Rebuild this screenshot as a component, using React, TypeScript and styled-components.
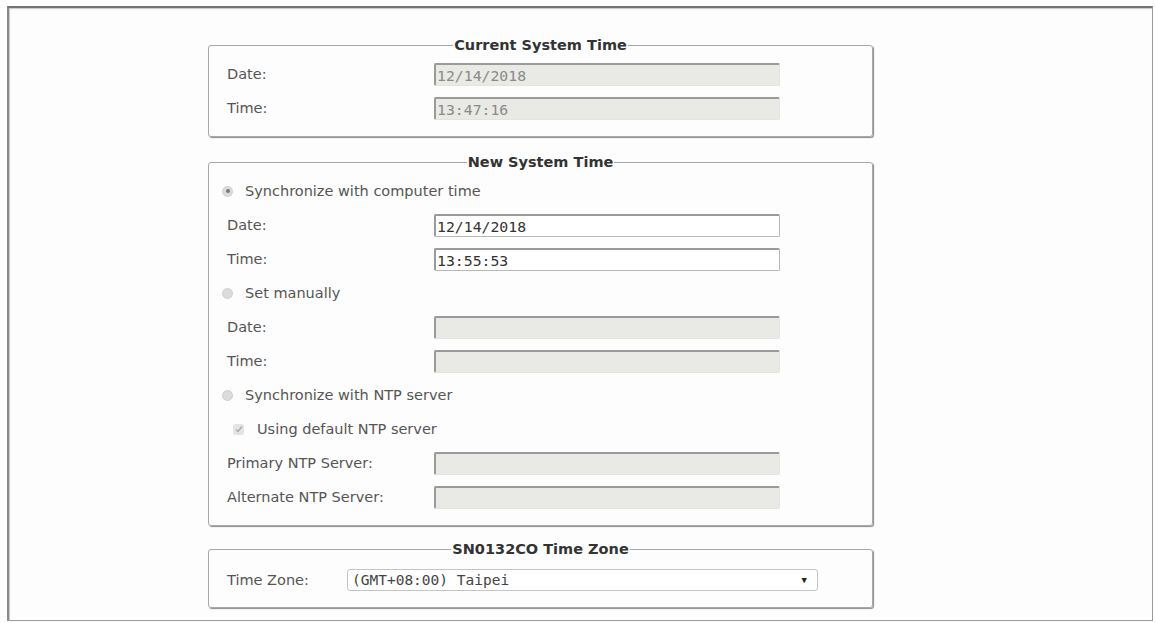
import React from "react";
import styled, { createGlobalStyle } from "styled-components";

const GlobalStyle = createGlobalStyle`
  html, body {
    margin: 0;
    padding: 0;
    background: #fff;
  }
  body {
    font-family: "DejaVu Sans", Verdana, sans-serif;
    font-size: 14.5px;
    color: #555;
  }
`;

const Page = styled.div`
  padding: 6px 3px 3px 7px;
`;

const Panel = styled.div`
  box-sizing: border-box;
  width: 1146px;
  height: 615px;
  border: 1px solid #9a9a9a;
  border-top: 2px solid #747474;
  border-left: 2px solid #8a8a8a;
  box-shadow: inset 1px 1px 1px #c8c8c8;
  background: #fdfdfd;
  padding: 29px 0 0 199px;
  display: flex;
  flex-direction: column;
  gap: 17px;
`;

const Group = styled.fieldset`
  box-sizing: border-box;
  width: 665px;
  margin: 0;
  padding: 4px 18px 11px;
  border: 1px solid #a8a8a8;
  border-radius: 3px;
  box-shadow: 1px 1px 1px #8c8c8c;
  min-inline-size: 0;

  &:last-child {
    margin-top: -2px;
    padding-top: 6px;
    padding-bottom: 10px;
  }
`;

const Title = styled.legend`
  margin: 0 auto;
  padding: 0 1px;
  line-height: 16px;
  font-weight: bold;
  font-size: 14.5px;
  color: #333;
`;

const Row = styled.div<{ $indent?: number }>`
  height: 34px;
  display: flex;
  align-items: center;
  padding-left: ${(p) => p.$indent ?? 0}px;
`;

const Label = styled.span<{ $width?: number }>`
  width: ${(p) => p.$width ?? 207}px;
  flex: none;
  color: #555;
`;

const Field = styled.div<{ $disabled?: boolean }>`
  box-sizing: border-box;
  width: 346px;
  height: 23px;
  display: flex;
  align-items: center;
  padding: 1px 0 0 1px;
  font-family: "DejaVu Sans Mono", "Liberation Mono", monospace;
  font-size: 14.8px;
  border-radius: 2px;
  color: ${(p) => (p.$disabled ? "#8a8a8a" : "#333")};
  background: ${(p) => (p.$disabled ? "#e9e9e5" : "#fff")};
  border: 1px solid ${(p) => (p.$disabled ? "#e4e4df" : "#b8b8b8")};
  border-top: 2px solid #9a9a9a;
  border-left: 2px solid #9a9a9a;
`;

const Select = styled.div`
  box-sizing: border-box;
  width: 471px;
  height: 22px;
  display: flex;
  align-items: center;
  justify-content: space-between;
  padding: 0 10px 0 4px;
  font-family: "DejaVu Sans Mono", "Liberation Mono", monospace;
  font-size: 14.5px;
  color: #444;
  background: #fff;
  border: 1px solid #c4c4c4;
  border-radius: 3px;
`;

const Arrow = styled.span`
  font-size: 9px;
  color: #222;
`;

const Radio = styled.span<{ $checked?: boolean }>`
  box-sizing: border-box;
  width: 11px;
  height: 11px;
  margin: 0 12px 0 -5px;
  border-radius: 50%;
  background: #dcdcdc;
  border: 1px solid #cfcfcf;
  display: flex;
  align-items: center;
  justify-content: center;

  &::after {
    content: "";
    width: 4px;
    height: 4px;
    border-radius: 50%;
    background: ${(p) => (p.$checked ? "#777" : "transparent")};
  }
`;

const Check = styled.span`
  box-sizing: border-box;
  width: 11px;
  height: 11px;
  margin-right: 13px;
  border-radius: 2px;
  background: #e4e4e4;
  display: flex;
  align-items: center;
  justify-content: center;
`;

const OptionText = styled.span`
  color: #555;
`;

function Option({ checked, children }: { checked?: boolean; children: React.ReactNode }) {
  return (
    <Row>
      <Radio $checked={checked} />
      <OptionText>{children}</OptionText>
    </Row>
  );
}

function InputRow({ label, value, disabled }: { label: string; value?: string; disabled?: boolean }) {
  return (
    <Row>
      <Label>{label}</Label>
      <Field $disabled={disabled}>{value}</Field>
    </Row>
  );
}

export default function App() {
  return (
    <>
      <GlobalStyle />
      <Page>
        <Panel>
          <Group>
            <Title>Current System Time</Title>
            <InputRow label="Date:" value="12/14/2018" disabled />
            <InputRow label="Time:" value="13:47:16" disabled />
          </Group>

          <Group>
            <Title>New System Time</Title>
            <Option checked>Synchronize with computer time</Option>
            <InputRow label="Date:" value="12/14/2018" />
            <InputRow label="Time:" value="13:55:53" />
            <Option>Set manually</Option>
            <InputRow label="Date:" disabled />
            <InputRow label="Time:" disabled />
            <Option>Synchronize with NTP server</Option>
            <Row $indent={6}>
              <Check>
                <svg width="8" height="8" viewBox="0 0 8 8">
                  <path d="M1 4.5 L3 6.5 L7 1.5" fill="none" stroke="#aaa" strokeWidth="1.4" />
                </svg>
              </Check>
              <OptionText>Using default NTP server</OptionText>
            </Row>
            <InputRow label="Primary NTP Server:" disabled />
            <InputRow label="Alternate NTP Server:" disabled />
          </Group>

          <Group>
            <Title>SN0132CO Time Zone</Title>
            <Row>
              <Label $width={120}>Time Zone:</Label>
              <Select>
                <span>(GMT+08:00) Taipei</span>
                <Arrow>▼</Arrow>
              </Select>
            </Row>
          </Group>
        </Panel>
      </Page>
    </>
  );
}
